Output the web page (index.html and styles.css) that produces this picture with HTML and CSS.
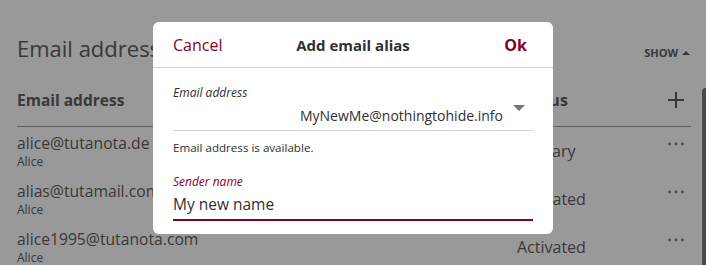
FILE: index.html
```html
<!DOCTYPE html>
<html>
<head>
<meta name="viewport" content="width=device-width, initial-scale=1">
<link rel="stylesheet" href="styles.css">
</head>
<body>

<div class="page">
  <div class="section-head">
    <h1>Email addresses</h1>
    <span class="toggle">SHOW <span class="caret"></span></span>
  </div>

  <div class="table">
    <div class="row head">
      <div class="col-mail">Email address</div>
      <div class="col-status">Status</div>
      <div class="col-action">
        <svg width="18" height="18" viewBox="0 0 18 18"><path d="M9 1v16M1 9h16" stroke="#5a5a5a" stroke-width="2" fill="none"/></svg>
      </div>
    </div>
    <div class="row">
      <div class="col-mail"><div class="addr">alice@tutanota.de</div><div class="name">Alice</div></div>
      <div class="col-status">Primary</div>
      <div class="col-action dots"><svg width="16" height="4" viewBox="0 0 16 4"><circle cx="1.5" cy="2" r="1.4"/><circle cx="8" cy="2" r="1.4"/><circle cx="14.5" cy="2" r="1.4"/></svg></div>
    </div>
    <div class="row">
      <div class="col-mail"><div class="addr">alias@tutamail.com</div><div class="name">Alice</div></div>
      <div class="col-status">Activated</div>
      <div class="col-action dots"><svg width="16" height="4" viewBox="0 0 16 4"><circle cx="1.5" cy="2" r="1.4"/><circle cx="8" cy="2" r="1.4"/><circle cx="14.5" cy="2" r="1.4"/></svg></div>
    </div>
    <div class="row">
      <div class="col-mail"><div class="addr">alice1995@tutanota.com</div><div class="name">Alice</div></div>
      <div class="col-status">Activated</div>
      <div class="col-action dots"><svg width="16" height="4" viewBox="0 0 16 4"><circle cx="1.5" cy="2" r="1.4"/><circle cx="8" cy="2" r="1.4"/><circle cx="14.5" cy="2" r="1.4"/></svg></div>
    </div>
  </div>
</div>

<div class="scrollbar"></div>

<div class="overlay">
  <div class="dialog">
    <div class="dialog-header">
      <span class="btn">Cancel</span>
      <span class="title">Add email alias</span>
      <span class="btn ok">Ok</span>
    </div>
    <div class="dialog-body">
      <div class="field">
        <label class="label">Email address</label>
        <div class="value-row">
          <span class="value">MyNewMe@nothingtohide.info</span>
          <span class="arrow"></span>
        </div>
      </div>
      <div class="helper">Email address is available.</div>
      <div class="field active">
        <label class="label">Sender name</label>
        <div class="input">My new name</div>
      </div>
    </div>
  </div>
</div>

</body>
</html>
```

FILE: styles.css
```css
body {
  margin: 0;
  width: 706px;
  height: 265px;
  overflow: hidden;
  font-family: "Open Sans", "Noto Sans", sans-serif;
  color: #616161;
  background: #fff;
}

/* Settings page behind the dialog */
.page {
  padding: 0 15px 0 17px;
}

.section-head {
  display: flex;
  align-items: baseline;
  justify-content: space-between;
  padding-top: 33px;
  height: 41px;
}

.section-head h1 {
  margin: 0;
  font-size: 22px;
  font-weight: 400;
  line-height: 30px;
}

.toggle {
  font-size: 11px;
  font-weight: 700;
  margin-right: 1px;
}

.caret {
  display: inline-block;
  width: 0;
  height: 0;
  border-left: 4px solid transparent;
  border-right: 4px solid transparent;
  border-bottom: 4px solid #616161;
  vertical-align: 2px;
  margin-left: 1px;
}

.row {
  display: flex;
  align-items: center;
  height: 48px;
}

.row.head {
  height: 52px;
  font-weight: 700;
  font-size: 15.5px;
  border-bottom: 1px solid #9e9e9e;
}

.col-mail {
  flex: 1;
}

.col-status {
  width: 144px;
  font-size: 16px;
}

.col-action {
  width: 30px;
  display: flex;
  justify-content: center;
}

.addr {
  font-size: 15.7px;
  line-height: 22px;
}

.name {
  font-size: 12px;
  line-height: 16px;
}

.dots {
  fill: #7c7c7c;
  margin-bottom: 14px;
}

.scrollbar {
  position: absolute;
  left: 702px;
  top: 88px;
  width: 8px;
  height: 200px;
  border-radius: 4px;
  background: #7a7a7a;
}

/* Modal */
.overlay {
  position: fixed;
  left: 0;
  top: 0;
  width: 100%;
  height: 100%;
  background-color: rgba(0,0,0,0.4);
  display: flex;
  justify-content: center;
  align-items: flex-start;
  padding-top: 22px;
  box-sizing: border-box;
}

.dialog {
  width: 400px;
  background: #fff;
  border-radius: 6px;
  color: #303030;
}

.dialog-header {
  height: 45px;
  border-bottom: 1px solid #d4d4d4;
  display: grid;
  grid-template-columns: 1fr auto 1fr;
  align-items: center;
  padding: 0 20px;
}

.btn {
  color: #850122;
  font-size: 16px;
}

.btn.ok {
  font-weight: 700;
  justify-self: end;
  margin-right: 6px;
}

.title {
  font-size: 15px;
  font-weight: 700;
}

.dialog-body {
  padding: 17px 20px 13px 20px;
}

.field .label {
  display: block;
  font-size: 12px;
  font-style: italic;
  line-height: 16px;
}

.value-row {
  display: flex;
  justify-content: flex-end;
  border-bottom: 1px solid #d4d4d4;
  height: 29px;
}

.value {
  font-size: 14px;
  line-height: 20px;
  align-self: flex-end;
  padding-bottom: 4px;
}

.arrow {
  width: 0;
  height: 0;
  border-left: 6px solid transparent;
  border-right: 6px solid transparent;
  border-top: 6px solid #757575;
  margin: 4px 8px 0 10px;
}

.helper {
  font-size: 11.6px;
  line-height: 16px;
  padding-top: 9px;
  height: 34px;
}

.field.active .label {
  color: #850122;
}

.input {
  font-size: 15.5px;
  line-height: 29px;
  border-bottom: 2px solid #850122;
}
```
